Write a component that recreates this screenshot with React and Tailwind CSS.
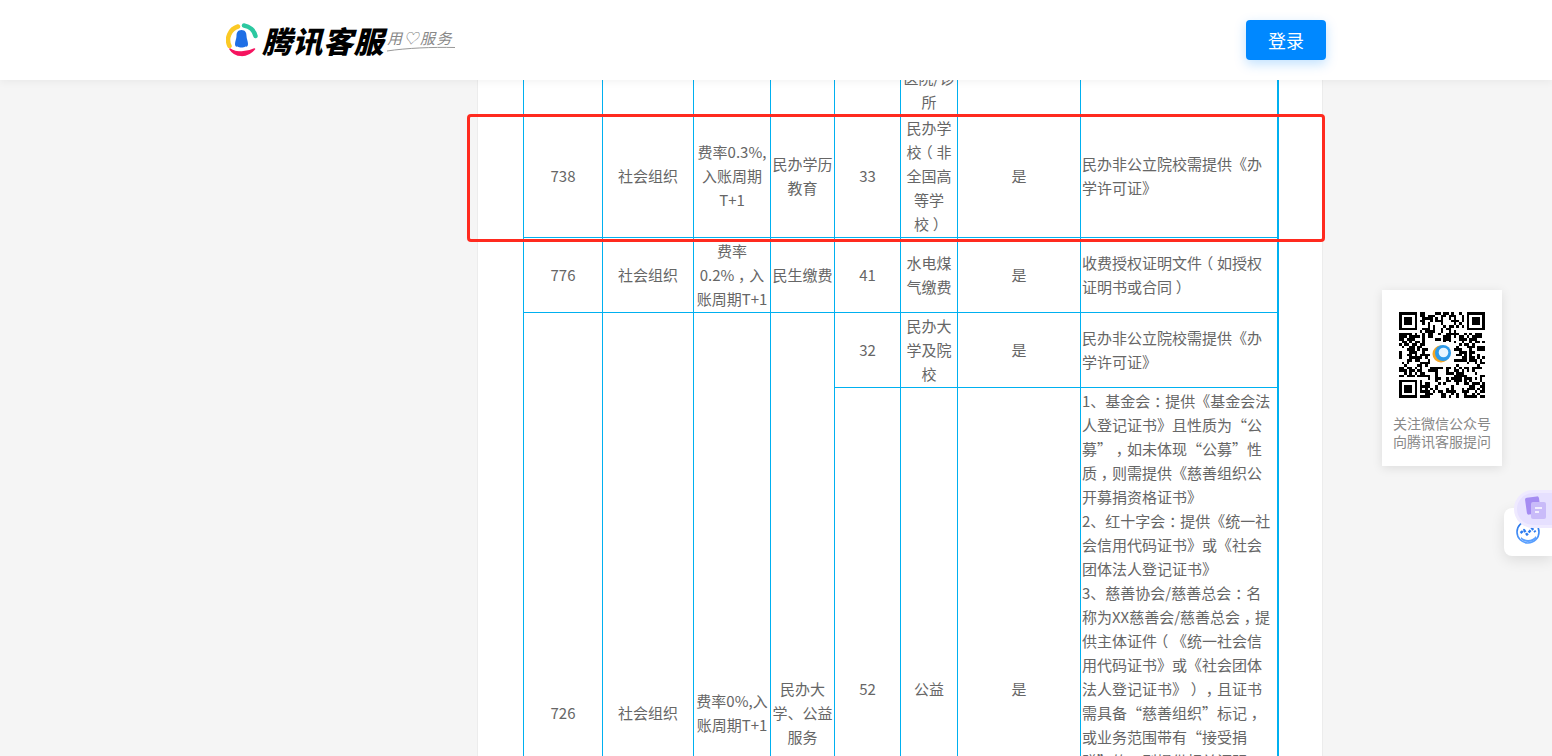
import React from 'react';

const font = '"Noto Sans CJK SC", "Noto Sans", sans-serif';

// QR modules are drawn from a fixed seed, the finder squares are placed by hand
const QR_SIZE = 33;
const qrModules = [];
let seed = 7321;
for (let y = 0; y < QR_SIZE; y++) {
  for (let x = 0; x < QR_SIZE; x++) {
    seed = (seed * 1103515245 + 12345) & 0x7fffffff;
    const inFinder = (x < 8 && y < 8) || (x > 24 && y < 8) || (x < 8 && y > 24);
    const inLogo = x > 11 && x < 21 && y > 11 && y < 21;
    if (!inFinder && !inLogo && (seed >> 16) % 100 < 52) qrModules.push([x, y]);
  }
}

function Finder({ x, y }) {
  return (
    <g>
      <rect x={x} y={y} width="7" height="7" fill="#000" />
      <rect x={x + 1} y={y + 1} width="5" height="5" fill="#fff" />
      <rect x={x + 2} y={y + 2} width="3" height="3" fill="#000" />
    </g>
  );
}

function QrCode() {
  return (
    <div className="relative w-[86px] h-[86px]">
      <svg width="86" height="86" viewBox="0 0 33 33" shapeRendering="crispEdges">
        {qrModules.map(([x, y]) => (
          <rect key={`${x}-${y}`} x={x} y={y} width="1" height="1" fill="#000" />
        ))}
        <Finder x={0} y={0} />
        <Finder x={26} y={0} />
        <Finder x={0} y={26} />
      </svg>
      <svg className="absolute left-[31px] top-[30px]" width="24" height="24" viewBox="0 0 24 24">
        <rect width="24" height="24" rx="2" fill="#fff" />
        <circle cx="11" cy="12" r="8.5" fill="#f5a623" />
        <circle cx="13" cy="11" r="8" fill="#2e9bea" />
        <circle cx="13.5" cy="10.5" r="4.8" fill="#e8f6ff" />
      </svg>
    </div>
  );
}

function Logo() {
  return (
    <div className="flex items-center h-[40px]">
      <svg width="32" height="36" viewBox="0 0 32 36" className="mr-[4px]">
        <path d="M3.5 24 A14 14 0 0 1 12 4.5" fill="none" stroke="#fbc925" strokeWidth="4.5" strokeLinecap="round" />
        <path d="M18 3.5 A14 14 0 0 1 29.5 14" fill="none" stroke="#2cc8a0" strokeWidth="4.5" strokeLinecap="round" />
        <path d="M4 27 C9 35 21 36 28.5 27 C21 31 10 31 4 27 Z" fill="#f5145f" stroke="#f5145f" strokeWidth="1.5" strokeLinejoin="round" />
        <path d="M15.5 8 C11.5 8 10.5 11 10.5 14 C10.5 17 9 19 9 22 C9 24 10 25 11.5 24.5 C13.5 25.8 17.5 25.8 19.5 24.5 C21 25 22 24 22 22 C22 19 20.5 17 20.5 14 C20.5 11 19.5 8 15.5 8 Z" fill="#1f6fe5" />
      </svg>
      <span className="text-[30px] leading-[40px] font-black italic text-black tracking-[0.5px] whitespace-nowrap">腾讯客服</span>
      <div className="relative ml-[3px] w-[66px] h-[30px]">
        <span className="block text-[15px] leading-[26px] italic text-[#888] whitespace-nowrap tracking-[1.5px]">用♡服务</span>
        <svg className="absolute left-0 top-[20px]" width="68" height="8" viewBox="0 0 68 8">
          <path d="M0 6 C20 3 45 2 68 2.5" fill="none" stroke="#999" strokeWidth="1" />
        </svg>
      </div>
    </div>
  );
}

// the reference centres full-width punctuation in its box: halve the glyph, pad both sides
const Mid = ({ children }) => (
  <span className="[font-feature-settings:'halt'] [text-spacing-trim:normal] px-[3.75px]">{children}</span>
);

const td = 'border border-[#00b0f0] text-center align-middle p-0 whitespace-nowrap';
const tdUp = 'border border-[#00b0f0] text-center align-middle p-0 pb-[2px] whitespace-nowrap';
const tdUp1 = 'border border-[#00b0f0] text-center align-middle p-0 pb-[1px] whitespace-nowrap';
const tdLeft = 'border border-[#00b0f0] border-r-2 text-left align-middle p-0 pl-[1px] whitespace-nowrap';

export default function App() {
  return (
    <div
      className="relative h-[756px] overflow-hidden bg-[#f5f5f5] text-[15px] leading-[24px] text-[#666] [text-spacing-trim:space-all]"
      style={{ fontFamily: font }}
    >
      <header className="relative z-10 h-[80px] bg-white shadow-[0_2px_8px_rgba(0,0,0,0.05)]">
        <div className="w-[1100px] h-full mx-auto flex items-center justify-between">
          <Logo />
          <button className="w-[80px] h-[40px] rounded-[4px] bg-[#0088ff] text-white text-[18px] shadow-[0_4px_12px_rgba(0,136,255,0.25)]">
            登录
          </button>
        </div>
      </header>

      <main className="w-[1100px] mx-auto flex justify-end pr-[3px]">
        <div className="w-[846px] h-[676px] overflow-hidden bg-white border-x border-[#ececec] pl-[45px]">
          <table className="table-fixed border-collapse w-[755px] mt-[-40px]">
            <colgroup>
              <col className="w-[79px]" />
              <col className="w-[91px]" />
              <col className="w-[77px]" />
              <col className="w-[64px]" />
              <col className="w-[66px]" />
              <col className="w-[57px]" />
              <col className="w-[123px]" />
              <col className="w-[197px]" />
            </colgroup>
            <tbody>
              <tr className="h-[75px]">
                <td className={td}></td>
                <td className={td}></td>
                <td className={td}></td>
                <td className={td}></td>
                <td className={td}></td>
                <td className={tdUp1}>民办<br />医院/诊<br />所</td>
                <td className={td}></td>
                <td className={tdLeft}></td>
              </tr>
              <tr className="h-[122px]">
                <td className={tdUp1}>738</td>
                <td className={tdUp1}>社会组织</td>
                <td className={tdUp1}>费率0.3%,<br />入账周期<br />T+1</td>
                <td className={tdUp1}>民办学历<br />教育</td>
                <td className={tdUp1}>33</td>
                <td className={tdUp1}>民办学<br />校<Mid>（</Mid>非<br />全国高<br />等学<br />校<Mid>）</Mid></td>
                <td className={tdUp1}>是</td>
                <td className={`${tdLeft} pb-[1px]`}>民办非公立院校需提供《办<br />学许可证》</td>
              </tr>
              <tr className="h-[75px]">
                <td className={td}>776</td>
                <td className={td}>社会组织</td>
                <td className={td}>费率<br />0.2%<Mid>，</Mid>入<br />账周期T+1</td>
                <td className={td}>民生缴费</td>
                <td className={td}>41</td>
                <td className={td}>水电煤<br />气缴费</td>
                <td className={td}>是</td>
                <td className={tdLeft}>收费授权证明文件<Mid>（</Mid>如授权<br />证明书或合同<Mid>）</Mid></td>
              </tr>
              <tr className="h-[75px]">
                <td className={tdUp} rowSpan={3}>726</td>
                <td className={tdUp} rowSpan={3}>社会组织</td>
                <td className={tdUp} rowSpan={3}>费率0%,入<br />账周期T+1</td>
                <td className={tdUp} rowSpan={3}>民办大<br />学、公益<br />服务</td>
                <td className={td}>32</td>
                <td className={td}>民办大<br />学及院<br />校</td>
                <td className={td}>是</td>
                <td className={tdLeft}>民办非公立院校需提供《办<br />学许可证》</td>
              </tr>
              <tr className="h-[604px]">
                <td className={tdUp}>52</td>
                <td className={tdUp}>公益</td>
                <td className={tdUp}>是</td>
                <td className={`${tdLeft} !align-top pt-[1px]`}>
                  1、基金会<Mid>：</Mid>提供《基金会法<br />
                  人登记证书》且性质为“公<br />
                  募”<Mid>，</Mid>如未体现“公募”性<br />
                  质<Mid>，</Mid>则需提供《慈善组织公<br />
                  开募捐资格证书》<br />
                  2、红十字会<Mid>：</Mid>提供《统一社<br />
                  会信用代码证书》或《社会<br />
                  团体法人登记证书》<br />
                  3、慈善协会/慈善总会<Mid>：</Mid>名<br />
                  称为XX慈善会/慈善总会<Mid>，</Mid>提<br />
                  供主体证件<Mid>（</Mid>《统一社会信<br />
                  用代码证书》或《社会团体<br />
                  法人登记证书》<Mid>）</Mid><Mid>，</Mid>且证书<br />
                  需具备“慈善组织”标记<Mid>，</Mid><br />
                  或业务范围带有“接受捐<br />
                  赠”的<Mid>，</Mid>则提供相关证明
                </td>
              </tr>
              <tr className="h-[123px]">
                <td className={td}></td>
                <td className={td}></td>
                <td className={td}></td>
                <td className={tdLeft}></td>
              </tr>
            </tbody>
          </table>
        </div>
      </main>

      {/* red annotation drawn over the table */}
      <div className="absolute left-[467px] top-[114px] w-[858px] h-[128px] border-[3px] border-[#ff2a1f] rounded-[4px]"></div>

      {/* floating QR card */}
      <aside className="absolute left-[1382px] top-[290px] w-[120px] h-[176px] bg-white shadow-[0_2px_10px_rgba(0,0,0,0.1)] flex flex-col items-center pt-[22px]">
        <QrCode />
        <p className="mt-[16px] text-[14px] leading-[18px] text-[#888] text-center whitespace-nowrap">
          关注微信公众号<br />向腾讯客服提问
        </p>
      </aside>

      {/* floating helper widgets */}
      <div className="absolute left-[1504px] top-[508px] w-[48px] h-[48px] bg-white rounded-l-[8px] shadow-[0_4px_14px_rgba(0,0,0,0.1)] flex items-center pl-[12px]">
        <svg width="24" height="24" viewBox="0 0 24 24">
          <defs>
            <linearGradient id="aiRing" x1="0" y1="0" x2="0" y2="1">
              <stop offset="0" stopColor="#1f6fe5" />
              <stop offset="1" stopColor="#5aa0ff" />
            </linearGradient>
          </defs>
          <circle cx="12" cy="12" r="11" fill="none" stroke="url(#aiRing)" strokeWidth="1.6" />
          <path d="M4.5 13 L8 10 L11 14.5 L16 8.5 L19.5 12" fill="none" stroke="#2b7bf0" strokeWidth="2.4" strokeLinejoin="round" strokeDasharray="3 1.2" />
          <path d="M5 17 C9 21 16 21 20 16 L20 19 C16 23 8 23 5 19 Z" fill="#5aa0ff" />
        </svg>
      </div>
      <div className="absolute left-[1514px] top-[490px] w-[60px] h-[38px] rounded-full bg-[#e6e0ff] border-[3px] border-[#efeaff] flex items-center pl-[8px]">
        <svg width="24" height="26" viewBox="0 0 24 26">
          <rect x="1" y="1" width="14" height="17" rx="2" transform="rotate(-8 8 10)" fill="#a58cf2" />
          <rect x="6" y="6" width="15" height="17" rx="2" fill="#c9bbf9" />
          <path d="M10 12 H17 M10 16 H14" stroke="#fff" strokeWidth="1.3" />
        </svg>
      </div>
    </div>
  );
}
